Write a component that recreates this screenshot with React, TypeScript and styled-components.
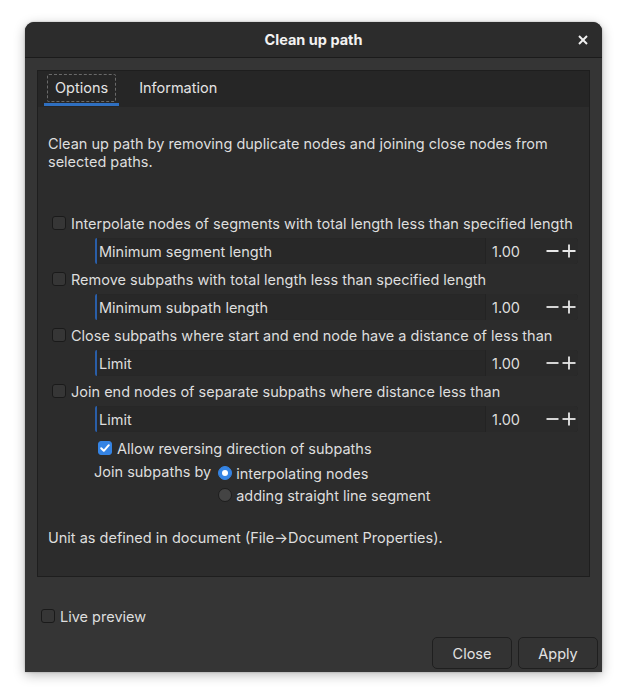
import styled, { createGlobalStyle } from "styled-components";

const GlobalStyle = createGlobalStyle`
  html, body {
    margin: 0;
    padding: 0;
    background: #ffffff;
  }
  body {
    font-family: Inter, "Noto Sans", sans-serif;
    font-size: 14.5px;
    color: #dedede;
  }
`;

// data -----------
const options = [
  {
    label: "Interpolate nodes of segments with total length less than specified length",
    field: "Minimum segment length",
  },
  {
    label: "Remove subpaths with total length less than specified length",
    field: "Minimum subpath length",
  },
  {
    label: "Close subpaths where start and end node have a distance of less than",
    field: "Limit",
  },
  {
    label: "Join end nodes of separate subpaths where distance less than",
    field: "Limit",
  },
];

const CheckMark = () => (
  <svg width="12" height="12" viewBox="0 0 12 12">
    <polyline
      points="2.2,6.2 4.8,8.8 9.8,3.2"
      fill="none"
      stroke="#ffffff"
      strokeWidth="2"
      strokeLinecap="round"
      strokeLinejoin="round"
    />
  </svg>
);

const MinusIcon = () => (
  <svg width="13" height="14" viewBox="0 0 13 14">
    <line x1="0.5" y1="7" x2="12.5" y2="7" stroke="#e8e8e8" strokeWidth="1.8" />
  </svg>
);

const PlusIcon = () => (
  <svg width="14" height="14" viewBox="0 0 14 14">
    <line x1="0.5" y1="7" x2="13.5" y2="7" stroke="#e8e8e8" strokeWidth="1.8" />
    <line x1="7" y1="0.5" x2="7" y2="13.5" stroke="#e8e8e8" strokeWidth="1.8" />
  </svg>
);

const CloseIcon = () => (
  <svg width="10" height="10" viewBox="0 0 10 10">
    <line x1="1" y1="1" x2="9" y2="9" stroke="#f0f0f0" strokeWidth="2" />
    <line x1="9" y1="1" x2="1" y2="9" stroke="#f0f0f0" strokeWidth="2" />
  </svg>
);

const App = () => {
  return (
    <Page>
      <GlobalStyle />
      <Window>
        <TitleBar>
          <span />
          <Title>Clean up path</Title>
          <CloseButton>
            <CloseIcon />
          </CloseButton>
        </TitleBar>

        <Body>
          <Notebook>
            <TabBar>
              <Tab $active>
                <span>Options</span>
              </Tab>
              <Tab>
                <span>Information</span>
              </Tab>
            </TabBar>

            <TabContent>
              <Description>
                Clean up path by removing duplicate nodes and joining close nodes from
                <br />
                selected paths.
              </Description>

              <OptionList>
                {options.map((opt, i) => (
                  <OptionGroup key={i}>
                    <CheckRow $indent={4}>
                      <CheckBox />
                      <span>{opt.label}</span>
                    </CheckRow>
                    <SpinEntry>
                      <SpinLabel>{opt.field}</SpinLabel>
                      <SpinValue>1.00</SpinValue>
                      <SpinButtons>
                        <MinusIcon />
                        <PlusIcon />
                      </SpinButtons>
                    </SpinEntry>
                  </OptionGroup>
                ))}
              </OptionList>

              <ReverseRow>
                <CheckRow $indent={50} $height={24}>
                  <CheckBox $checked>
                    <CheckMark />
                  </CheckBox>
                  <span>Allow reversing direction of subpaths</span>
                </CheckRow>
              </ReverseRow>

              <JoinGrid>
                <JoinLabel>Join subpaths by</JoinLabel>
                <RadioRow>
                  <Radio $checked />
                  <span>interpolating nodes</span>
                </RadioRow>
                <RadioRow>
                  <Radio />
                  <span>adding straight line segment</span>
                </RadioRow>
              </JoinGrid>

              <UnitNote>Unit as defined in document (File→Document Properties).</UnitNote>
            </TabContent>
          </Notebook>

          <Footer>
            <CheckRow $indent={4} $height={24}>
              <CheckBox $gap={5} />
              <span>Live preview</span>
            </CheckRow>
            <ButtonRow>
              <DialogButton>Close</DialogButton>
              <DialogButton>Apply</DialogButton>
            </ButtonRow>
          </Footer>
        </Body>
      </Window>
    </Page>
  );
};

const Page = styled.div`
  padding: 22px 24px 0 25px;
  height: 700px;
  box-sizing: border-box;
`;

const Window = styled.div`
  width: 577px;
  height: 650px;
  display: flex;
  flex-direction: column;
  background: #353535;
  border-radius: 9px 9px 0 0;
  box-shadow: 0 3px 12px rgba(0, 0, 0, 0.28), 0 0 2px rgba(0, 0, 0, 0.3);
  overflow: hidden;
`;

const TitleBar = styled.div`
  height: 35px;
  display: grid;
  grid-template-columns: 1fr auto 1fr;
  align-items: center;
  background: #2c2c2c;
  border-bottom: 1px solid #1b1b1b;
`;

const Title = styled.div`
  font-weight: 700;
  font-size: 14.5px;
  color: #f2f2f2;
`;

const CloseButton = styled.div`
  justify-self: end;
  display: flex;
  align-items: center;
  padding-right: 14px;
  padding-top: 1px;
`;

const Body = styled.div`
  flex: 1;
  display: flex;
  flex-direction: column;
  padding: 12px 12px 0 12px;
`;

const Notebook = styled.div`
  height: 507px;
  box-sizing: border-box;
  border: 1px solid #1e1e1e;
  display: flex;
  flex-direction: column;
  background: #2c2c2c;
`;

const TabBar = styled.div`
  height: 36px;
  box-sizing: border-box;
  display: flex;
  align-items: stretch;
  padding-left: 6px;
  padding-bottom: 3px;
  gap: 9px;
  background: #262626;
`;

const Tab = styled.div<{ $active?: boolean }>`
  position: relative;
  display: flex;
  align-items: center;
  padding: 0 3px;
  color: #e4e4e4;

  span {
    padding: 4px 7px 5px;
    border: 1px dashed ${(p) => (p.$active ? "#6a6a6a" : "transparent")};
    border-radius: 2px;
  }

  &::after {
    content: "";
    position: absolute;
    left: 0;
    right: 0;
    bottom: -2px;
    height: 3px;
    background: ${(p) => (p.$active ? "#2f6fc0" : "transparent")};
  }
`;

const TabContent = styled.div`
  flex: 1;
  padding: 28px 10px 0 10px;
`;

const Description = styled.div`
  line-height: 18px;
  margin-bottom: 38px;
`;

const OptionList = styled.div`
  display: flex;
  flex-direction: column;
`;

const OptionGroup = styled.div`
  display: flex;
  flex-direction: column;
  gap: 1px;
  margin-bottom: 1px;
`;

const CheckRow = styled.div<{ $indent: number; $height?: number }>`
  display: flex;
  align-items: center;
  height: ${(p) => p.$height ?? 28}px;
  padding-left: ${(p) => p.$indent}px;
`;

const ReverseRow = styled.div`
  margin-top: 3px;
`;

const CheckBox = styled.div<{ $checked?: boolean; $gap?: number }>`
  width: 14px;
  height: 14px;
  flex-shrink: 0;
  box-sizing: border-box;
  margin-right: ${(p) => p.$gap ?? 5}px;
  border-radius: 3px;
  display: flex;
  align-items: center;
  justify-content: center;
  background: ${(p) => (p.$checked ? "#3584e4" : "#363636")};
  border: 1px solid ${(p) => (p.$checked ? "#3584e4" : "#1a1a1a")};
`;

const SpinEntry = styled.div`
  margin-left: 47px;
  margin-right: 1px;
  height: 26px;
  display: flex;
  align-items: stretch;
  background: #282828;
  border-radius: 4px;
  box-shadow: inset 0 0 0 1px #272727;
`;

const SpinLabel = styled.div`
  flex: 1;
  display: flex;
  align-items: center;
  padding-left: 2px;
  border-left: 2px solid #2a5ea8;
  border-radius: 2px 0 0 2px;
  border-right: 1px solid #232323;
`;

const SpinValue = styled.div`
  width: 56px;
  display: flex;
  align-items: center;
  padding-left: 6px;
  box-sizing: border-box;
  background: #2a2a2a;
`;

const SpinButtons = styled.div`
  display: flex;
  align-items: center;
  gap: 3px;
  padding: 0 2px 0 4px;
  background: #2a2a2a;
  border-radius: 0 4px 4px 0;
`;

const JoinGrid = styled.div`
  display: grid;
  grid-template-columns: auto auto;
  justify-content: start;
  column-gap: 7px;
  padding-left: 46px;
  padding-top: 2px;
`;

const JoinLabel = styled.div`
  align-self: start;
  line-height: 16px;
  margin-top: 2px;
`;

const RadioRow = styled.div`
  grid-column: 2;
  height: 22px;
  display: flex;
  align-items: center;
  gap: 4px;
`;

const Radio = styled.div<{ $checked?: boolean }>`
  width: 14px;
  height: 14px;
  flex-shrink: 0;
  box-sizing: border-box;
  border-radius: 50%;
  background: ${(p) => (p.$checked ? "#3584e4" : "#444444")};
  border: 1px solid ${(p) => (p.$checked ? "#3584e4" : "#1d1d1d")};
  display: flex;
  align-items: center;
  justify-content: center;

  &::after {
    content: "";
    width: 6px;
    height: 6px;
    border-radius: 50%;
    background: ${(p) => (p.$checked ? "#ffffff" : "transparent")};
  }
`;

const UnitNote = styled.div`
  margin-top: 23px;
  line-height: 18px;
`;

const Footer = styled.div`
  flex: 1;
  display: flex;
  flex-direction: column;
  padding-top: 27px;
`;

const ButtonRow = styled.div`
  display: flex;
  justify-content: flex-end;
  gap: 6px;
  margin-top: 9px;
  margin-right: -8px;
`;

const DialogButton = styled.div`
  width: 80px;
  height: 32px;
  box-sizing: border-box;
  display: flex;
  align-items: center;
  justify-content: center;
  background: #333333;
  border: 1px solid #1f1f1f;
  border-radius: 5px;
  color: #e2e2e2;
  font-size: 14.5px;
`;

export default App;
